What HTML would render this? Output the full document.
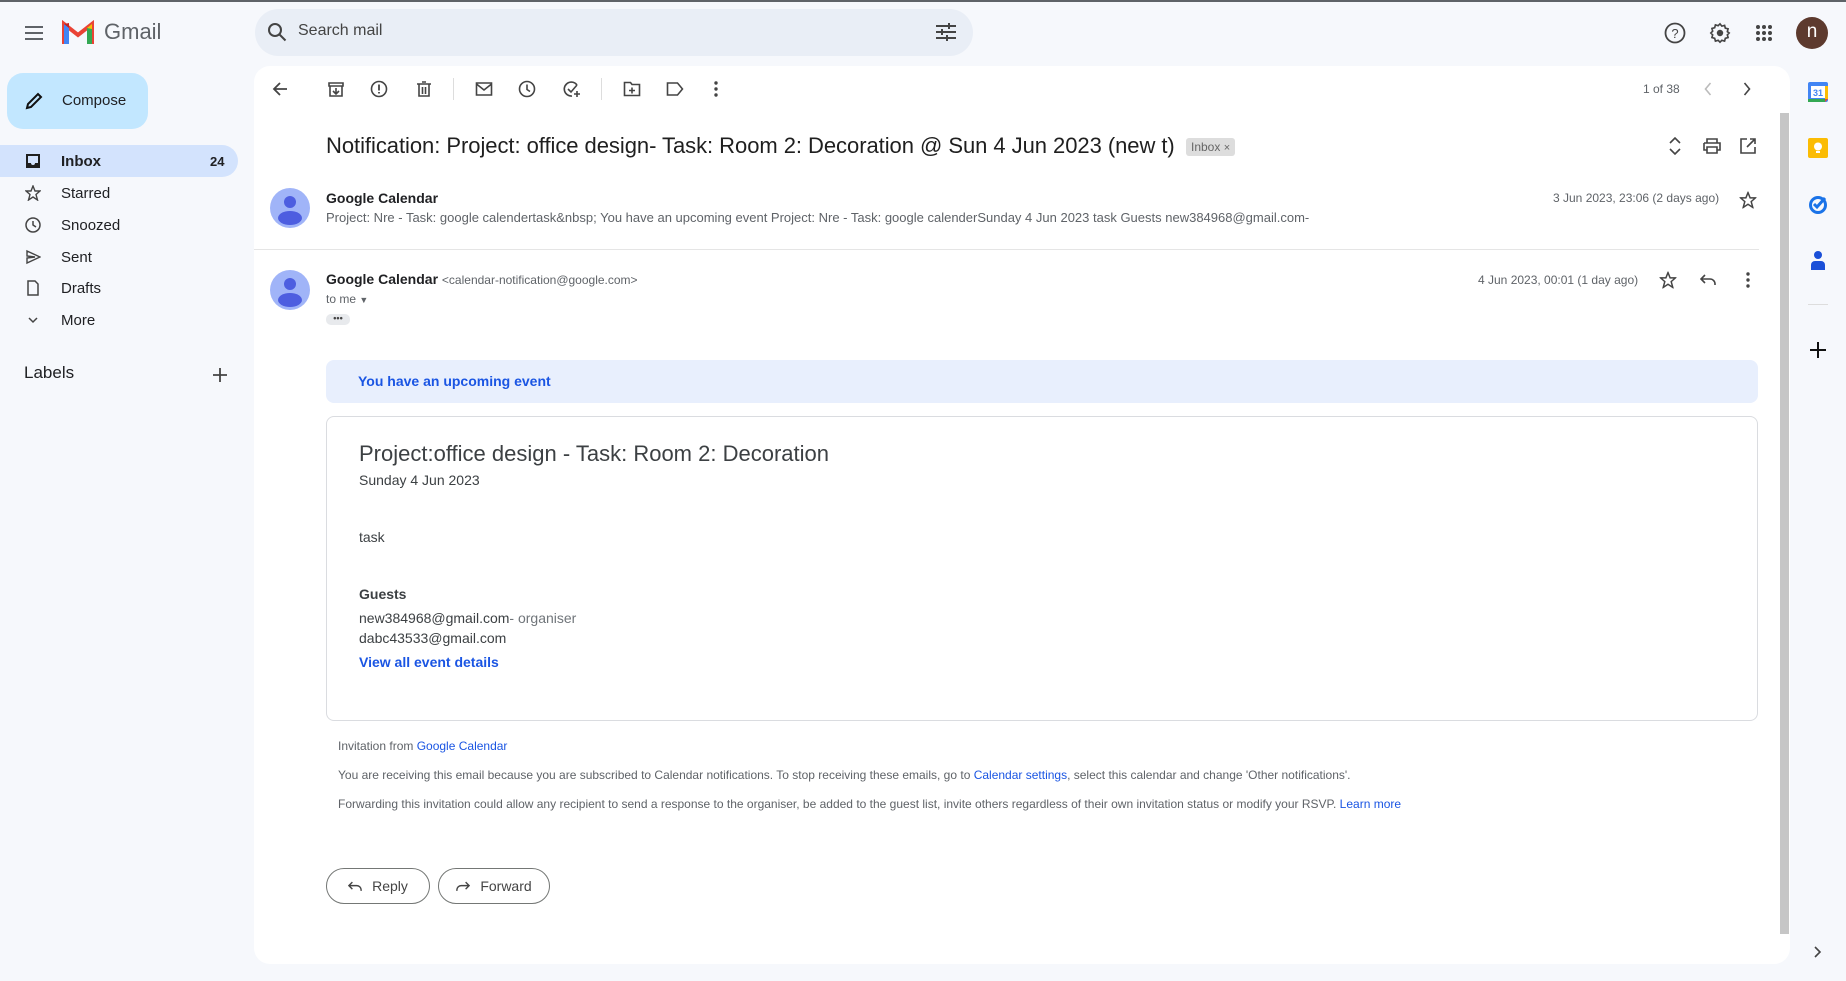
<!DOCTYPE html>
<html><head><meta charset="utf-8"><style>
*{box-sizing:border-box;margin:0;padding:0}
body{width:1846px;height:981px;background:#f6f8fc;font-family:"Liberation Sans",Arial,sans-serif;color:#202124;position:relative;overflow:hidden}
.a{position:absolute}
svg{display:block}
.nav{position:absolute;left:0;width:238px;height:32px;display:flex;align-items:center;font-size:15px;color:#202124}
.nav svg{margin-left:25px;margin-right:20px}
.ic{position:absolute;transform:translate(-50%,-50%)}
.ft{position:absolute;left:338px;font-size:12px;color:#5f6368;white-space:nowrap}
.ft a,.lk{color:#1a55e3;text-decoration:none}
</style></head><body>
<div class="a" style="left:0;top:0;width:1846px;height:2px;background:#5f6368"></div>
<!-- header -->
<svg class="ic" style="left:34px;top:33px" width="20" height="16" viewBox="0 0 20 16"><path d="M1 2h18M1 8h18M1 14h18" stroke="#5f6368" stroke-width="2"/></svg>
<svg class="a" style="left:62px;top:20px" width="32" height="24" viewBox="0 0 32 24"><path d="M2 24V4l14 11L30 4v20" fill="none" stroke="#ea4335" stroke-width="4"/><path d="M2 4v20h5V8z" fill="#4285f4"/><path d="M30 4v20h-5V8z" fill="#34a853"/><path d="M25 8l5-4v5z" fill="#fbbc04"/><path d="M2 4l5 4V3z" fill="#c5221f"/></svg>
<div class="a" style="left:104px;top:19px;font-size:22px;color:#5f6368">Gmail</div>
<div class="a" style="left:255px;top:9px;width:718px;height:47px;background:#e9eef6;border-radius:24px"></div>
<svg class="ic" style="left:277px;top:32px" width="20" height="20" viewBox="0 0 20 20"><circle cx="8" cy="8" r="6" fill="none" stroke="#444" stroke-width="2"/><path d="M12.5 12.5l6 6" stroke="#444" stroke-width="2"/></svg>
<div class="a" style="left:298px;top:22px;font-size:16px;color:#444">Search mail</div>
<svg class="ic" style="left:946px;top:32px" width="20" height="18" viewBox="0 0 20 18"><path d="M0 3h20M0 9h20M0 15h20" stroke="#444" stroke-width="2"/><path d="M13 0v6M6 6v6M11 12v6" stroke="#444" stroke-width="2"/></svg>
<svg class="ic" style="left:1675px;top:33px" width="22" height="22" viewBox="0 0 22 22"><circle cx="11" cy="11" r="9.5" fill="none" stroke="#444" stroke-width="1.8"/><text x="11" y="16" text-anchor="middle" font-size="13" fill="#444" font-family="Liberation Sans">?</text></svg>
<svg class="ic" style="left:1720px;top:33px" width="22" height="22" viewBox="0 0 24 24"><path d="M12 2l2 2.5 3-.8.8 3 3 .8-.8 3L22 12l-2 2 .8 3-3 .8-.8 3-3-.8L12 22l-2-2-3 .8-.8-3-3-.8.8-3L2 12l2-2-.8-3 3-.8.8-3 3 .8z" fill="none" stroke="#444" stroke-width="1.8"/><circle cx="12" cy="12" r="3.5" fill="#444"/></svg>
<svg class="ic" style="left:1764px;top:33px" width="18" height="18" viewBox="0 0 18 18" fill="#444"><circle cx="3" cy="3" r="2"/><circle cx="9" cy="3" r="2"/><circle cx="15" cy="3" r="2"/><circle cx="3" cy="9" r="2"/><circle cx="9" cy="9" r="2"/><circle cx="15" cy="9" r="2"/><circle cx="3" cy="15" r="2"/><circle cx="9" cy="15" r="2"/><circle cx="15" cy="15" r="2"/></svg>
<div class="a" style="left:1796px;top:17px;width:32px;height:32px;border-radius:50%;background:#5d3a2e;color:#fff;font-size:19px;text-align:center;line-height:30px">n</div>
<!-- sidebar -->
<div class="a" style="left:7px;top:73px;width:141px;height:56px;background:#c2e7ff;border-radius:16px"></div>
<svg class="ic" style="left:34px;top:101px" width="20" height="20" viewBox="0 0 20 20"><path d="M3 17l1-4L14 3l3 3L7 16z" fill="none" stroke="#111" stroke-width="2"/></svg>
<div class="a" style="left:62px;top:92px;font-size:15px">Compose</div>
<div class="a" style="left:0;top:145px;width:238px;height:32px;background:#d3e3fd;border-radius:0 16px 16px 0"></div>
<div class="nav" style="top:145px;font-weight:bold"><svg width="16" height="16" viewBox="0 0 16 16"><path d="M1 1h14v14H1z" fill="#1f1f1f"/><path d="M3 3h10v7h-3a2 2 0 01-4 0H3z" fill="#d3e3fd"/></svg>Inbox<span style="position:absolute;left:210px;font-size:13px">24</span></div>
<div class="nav" style="top:177px"><svg width="16" height="16" viewBox="0 0 16 16"><path d="M8 1l2 5h5l-4 3.5 1.5 5.5L8 12l-4.5 3L5 9.5 1 6h5z" fill="none" stroke="#444" stroke-width="1.4"/></svg>Starred</div>
<div class="nav" style="top:209px"><svg width="16" height="16" viewBox="0 0 16 16"><circle cx="8" cy="8" r="7" fill="none" stroke="#444" stroke-width="1.5"/><path d="M8 4v4l3 2" fill="none" stroke="#444" stroke-width="1.5"/></svg>Snoozed</div>
<div class="nav" style="top:241px"><svg width="16" height="16" viewBox="0 0 16 16"><path d="M2 2l13 6-13 6V9l8-1-8-1z" fill="none" stroke="#444" stroke-width="1.4"/></svg>Sent</div>
<div class="nav" style="top:272px"><svg width="16" height="16" viewBox="0 0 16 16"><path d="M3 1h7l3 3v11H3z" fill="none" stroke="#444" stroke-width="1.5"/></svg>Drafts</div>
<div class="nav" style="top:304px"><svg width="16" height="16" viewBox="0 0 16 16"><path d="M4 6l4 4 4-4" fill="none" stroke="#444" stroke-width="1.5"/></svg>More</div>
<div class="a" style="left:24px;top:363px;font-size:17px">Labels</div>
<svg class="ic" style="left:220px;top:375px" width="14" height="14" viewBox="0 0 14 14"><path d="M7 0v14M0 7h14" stroke="#444" stroke-width="1.8"/></svg>
<!-- main card -->
<div class="a" style="left:254px;top:66px;width:1536px;height:898px;background:#fff;border-radius:16px"></div>
<div class="a" style="left:1780px;top:113px;width:9px;height:821px;background:#c6c6c6"></div>
<!-- toolbar -->
<svg class="ic" style="left:280px;top:89px" width="16" height="16" viewBox="0 0 16 16"><path d="M15 8H2M8 2L2 8l6 6" fill="none" stroke="#444" stroke-width="1.8"/></svg>
<svg class="ic" style="left:336px;top:89px" width="16" height="16" viewBox="0 0 16 16"><path d="M1 2h14v3H1zM2 5v10h12V5M8 7v6M5 10l3 3 3-3" fill="none" stroke="#444" stroke-width="1.6"/></svg>
<svg class="ic" style="left:379px;top:89px" width="17" height="17" viewBox="0 0 17 17"><circle cx="8.5" cy="8.5" r="7.5" fill="none" stroke="#444" stroke-width="1.6"/><path d="M8.5 4v6M8.5 11.5v1.5" stroke="#444" stroke-width="1.8"/></svg>
<svg class="ic" style="left:424px;top:89px" width="14" height="16" viewBox="0 0 14 16"><path d="M0 3h14M5 1h4M2 3v12h10V3M5.5 6v7M8.5 6v7" fill="none" stroke="#444" stroke-width="1.6"/></svg>
<div class="a" style="left:453px;top:78px;width:1px;height:22px;background:#ddd"></div>
<svg class="ic" style="left:484px;top:89px" width="17" height="14" viewBox="0 0 17 14"><path d="M1 1h15v12H1zM1 2l7.5 6L16 2" fill="none" stroke="#444" stroke-width="1.6"/></svg>
<svg class="ic" style="left:527px;top:89px" width="17" height="17" viewBox="0 0 17 17"><circle cx="8.5" cy="8.5" r="7.5" fill="none" stroke="#444" stroke-width="1.6"/><path d="M8.5 4v5l3 2" fill="none" stroke="#444" stroke-width="1.6"/></svg>
<svg class="ic" style="left:572px;top:89px" width="18" height="18" viewBox="0 0 18 18"><path d="M14 5A7 7 0 1 0 9 16M5 9l3 3 6-7M14 11v6M11 14h6" fill="none" stroke="#444" stroke-width="1.6"/></svg>
<div class="a" style="left:601px;top:78px;width:1px;height:22px;background:#ddd"></div>
<svg class="ic" style="left:632px;top:89px" width="17" height="15" viewBox="0 0 17 15"><path d="M1 1h6l1.5 2H16v11H1zM8.5 6v6M5.5 9h6" fill="none" stroke="#444" stroke-width="1.6"/></svg>
<svg class="ic" style="left:675px;top:89px" width="17" height="14" viewBox="0 0 17 14"><path d="M1 1h10l5 6-5 6H1z" fill="none" stroke="#444" stroke-width="1.6"/></svg>
<svg class="ic" style="left:716px;top:89px" width="4" height="16" viewBox="0 0 4 16" fill="#444"><circle cx="2" cy="2" r="1.7"/><circle cx="2" cy="8" r="1.7"/><circle cx="2" cy="14" r="1.7"/></svg>
<div class="a" style="left:1643px;top:82px;font-size:12px;color:#5f6368">1 of 38</div>
<svg class="ic" style="left:1708px;top:89px" width="9" height="14" viewBox="0 0 9 14"><path d="M7 1L2 7l5 6" fill="none" stroke="#bbb" stroke-width="1.6"/></svg>
<svg class="ic" style="left:1747px;top:89px" width="9" height="14" viewBox="0 0 9 14"><path d="M2 1l5 6-5 6" fill="none" stroke="#444" stroke-width="1.6"/></svg>
<!-- subject -->
<div class="a" style="left:326px;top:133px;font-size:22px;color:#1f1f1f;white-space:nowrap;letter-spacing:-0.05px">Notification: Project: office design- Task: Room 2: Decoration @ Sun 4 Jun 2023 (new t)</div>
<div class="a" style="left:1186px;top:138px;height:18px;background:#ddd;border-radius:3px;font-size:12px;color:#666;padding:2px 5px">Inbox <span style="font-size:11px">×</span></div>
<svg class="ic" style="left:1675px;top:146px" width="12" height="18" viewBox="0 0 12 18"><path d="M1 6l5-5 5 5M1 12l5 5 5-5" fill="none" stroke="#444" stroke-width="1.6"/></svg>
<svg class="ic" style="left:1712px;top:146px" width="18" height="16" viewBox="0 0 18 16"><path d="M4 5V1h10v4M1 5h16v7h-3M4 12H1V5M4 9h10v6H4z" fill="none" stroke="#444" stroke-width="1.6"/></svg>
<svg class="ic" style="left:1748px;top:146px" width="16" height="16" viewBox="0 0 16 16"><path d="M7 1H1v14h14V9M10 1h5v5M15 1L7 9" fill="none" stroke="#444" stroke-width="1.6"/></svg>
<!-- message 1 -->
<svg class="ic" style="left:290px;top:208px" width="40" height="40" viewBox="0 0 40 40"><circle cx="20" cy="20" r="20" fill="#a0b4f8"/><circle cx="20" cy="14" r="6" fill="#4d5ee0"/><ellipse cx="20" cy="30" rx="12" ry="7" fill="#4d5ee0"/></svg>
<div class="a" style="left:326px;top:190px;font-size:14px;font-weight:bold">Google Calendar</div>
<div class="a" style="left:326px;top:210px;font-size:13px;color:#5f6368;white-space:nowrap">Project: Nre - Task: google calendertask&amp;nbsp; You have an upcoming event Project: Nre - Task: google calenderSunday 4 Jun 2023 task Guests new384968@gmail.com-</div>
<div class="a" style="left:1553px;top:191px;font-size:12px;color:#5f6368">3 Jun 2023, 23:06 (2 days ago)</div>
<svg class="ic" style="left:1748px;top:200px" width="17" height="17" viewBox="0 0 16 16"><path d="M8 1l2 5h5l-4 3.5 1.5 5.5L8 12l-4.5 3L5 9.5 1 6h5z" fill="none" stroke="#444" stroke-width="1.4"/></svg>
<div class="a" style="left:254px;top:249px;width:1505px;height:1px;background:#e5e5e5"></div>
<!-- message 2 -->
<svg class="ic" style="left:290px;top:290px" width="40" height="40" viewBox="0 0 40 40"><circle cx="20" cy="20" r="20" fill="#a0b4f8"/><circle cx="20" cy="14" r="6" fill="#4d5ee0"/><ellipse cx="20" cy="30" rx="12" ry="7" fill="#4d5ee0"/></svg>
<div class="a" style="left:326px;top:271px;font-size:14px;white-space:nowrap"><b>Google Calendar</b> <span style="font-size:12px;color:#5f6368">&lt;calendar-notification@google.com&gt;</span></div>
<div class="a" style="left:326px;top:292px;font-size:12px;color:#5f6368">to me <span style="font-size:9px">▼</span></div>
<div class="a" style="left:326px;top:314px;width:24px;height:11px;background:#e8eaed;border-radius:5px;font-size:9px;text-align:center;line-height:9px;color:#444;font-weight:bold">•••</div>
<div class="a" style="left:1478px;top:273px;font-size:12px;color:#5f6368">4 Jun 2023, 00:01 (1 day ago)</div>
<svg class="ic" style="left:1668px;top:280px" width="17" height="17" viewBox="0 0 16 16"><path d="M8 1l2 5h5l-4 3.5 1.5 5.5L8 12l-4.5 3L5 9.5 1 6h5z" fill="none" stroke="#444" stroke-width="1.4"/></svg>
<svg class="ic" style="left:1708px;top:280px" width="16" height="12" viewBox="0 0 16 12"><path d="M5 1L1 5l4 4M1 5h9a5 5 0 015 5v1" fill="none" stroke="#444" stroke-width="1.6"/></svg>
<svg class="ic" style="left:1748px;top:280px" width="4" height="16" viewBox="0 0 4 16" fill="#444"><circle cx="2" cy="2" r="1.7"/><circle cx="2" cy="8" r="1.7"/><circle cx="2" cy="14" r="1.7"/></svg>
<!-- body -->
<div class="a" style="left:326px;top:360px;width:1432px;height:43px;background:#e8effd;border-radius:8px"></div>
<div class="a" style="left:358px;top:373px;font-size:14px;font-weight:bold;color:#1a55e3">You have an upcoming event</div>
<div class="a" style="left:326px;top:416px;width:1432px;height:305px;border:1px solid #dadce0;border-radius:8px"></div>
<div class="a" style="left:359px;top:441px;font-size:22px;color:#3c4043;white-space:nowrap">Project:office design - Task: Room 2: Decoration</div>
<div class="a" style="left:359px;top:472px;font-size:14px;color:#3c4043">Sunday 4 Jun 2023</div>
<div class="a" style="left:359px;top:529px;font-size:14px;color:#3c4043">task</div>
<div class="a" style="left:359px;top:586px;font-size:14px;font-weight:bold;color:#3c4043">Guests</div>
<div class="a" style="left:359px;top:610px;font-size:14px;color:#3c4043">new384968@gmail.com<span style="color:#70757a">- organiser</span></div>
<div class="a" style="left:359px;top:630px;font-size:14px;color:#3c4043">dabc43533@gmail.com</div>
<div class="a lk" style="left:359px;top:654px;font-size:14px;font-weight:bold">View all event details</div>
<div class="ft" style="top:739px">Invitation from <a>Google Calendar</a></div>
<div class="ft" style="top:768px">You are receiving this email because you are subscribed to Calendar notifications. To stop receiving these emails, go to <a>Calendar settings</a>, select this calendar and change 'Other notifications'.</div>
<div class="ft" style="top:797px">Forwarding this invitation could allow any recipient to send a response to the organiser, be added to the guest list, invite others regardless of their own invitation status or modify your RSVP. <a>Learn more</a></div>
<div class="a" style="left:326px;top:868px;width:104px;height:36px;border:1px solid #747775;border-radius:18px;font-size:14px;color:#444;display:flex;align-items:center;justify-content:center;gap:10px"><svg width="14" height="11" viewBox="0 0 16 12"><path d="M5 1L1 5l4 4M1 5h9a5 5 0 015 5v1" fill="none" stroke="#444" stroke-width="1.6"/></svg>Reply</div>
<div class="a" style="left:438px;top:868px;width:112px;height:36px;border:1px solid #747775;border-radius:18px;font-size:14px;color:#444;display:flex;align-items:center;justify-content:center;gap:10px"><svg width="14" height="11" viewBox="0 0 16 12"><path d="M11 1l4 4-4 4M15 5H6a5 5 0 00-5 5v1" fill="none" stroke="#444" stroke-width="1.6"/></svg>Forward</div>
<!-- right rail -->
<svg class="ic" style="left:1818px;top:92px" width="20" height="20" viewBox="0 0 20 20"><rect x="0" y="0" width="20" height="20" rx="2" fill="#4285f4"/><rect x="3" y="4" width="14" height="12" fill="#fff"/><text x="10" y="14" text-anchor="middle" font-size="9" fill="#4285f4" font-family="Liberation Sans" font-weight="bold">31</text><path d="M0 17h17v3H0z" fill="#34a853"/><path d="M17 4h3v13h-3z" fill="#fbbc04"/><path d="M17 17h3l-3 3z" fill="#ea4335"/></svg>
<svg class="ic" style="left:1818px;top:148px" width="20" height="20" viewBox="0 0 20 20"><rect width="20" height="20" rx="2" fill="#fbbc04"/><circle cx="10" cy="8.5" r="4" fill="#fff"/><rect x="8" y="13" width="4" height="2" fill="#fff"/></svg>
<svg class="ic" style="left:1818px;top:204px" width="20" height="20" viewBox="0 0 20 20"><circle cx="10" cy="11" r="7.5" fill="none" stroke="#1a73e8" stroke-width="3"/><path d="M6 10l3 3 8-9" fill="none" stroke="#1a73e8" stroke-width="3"/></svg>
<svg class="ic" style="left:1818px;top:260px" width="16" height="20" viewBox="0 0 16 20"><circle cx="8" cy="5" r="4" fill="#1a4fd8"/><path d="M1 20v-5a4 4 0 014-4h6a4 4 0 014 4v5z" fill="#1a4fd8"/></svg>
<div class="a" style="left:1808px;top:304px;width:20px;height:1px;background:#ddd"></div>
<svg class="ic" style="left:1818px;top:350px" width="16" height="16" viewBox="0 0 16 16"><path d="M8 0v16M0 8h16" stroke="#111" stroke-width="2"/></svg>
<svg class="ic" style="left:1818px;top:952px" width="8" height="12" viewBox="0 0 8 12"><path d="M1 1l5 5-5 5" fill="none" stroke="#444" stroke-width="1.6"/></svg>
</body></html>
